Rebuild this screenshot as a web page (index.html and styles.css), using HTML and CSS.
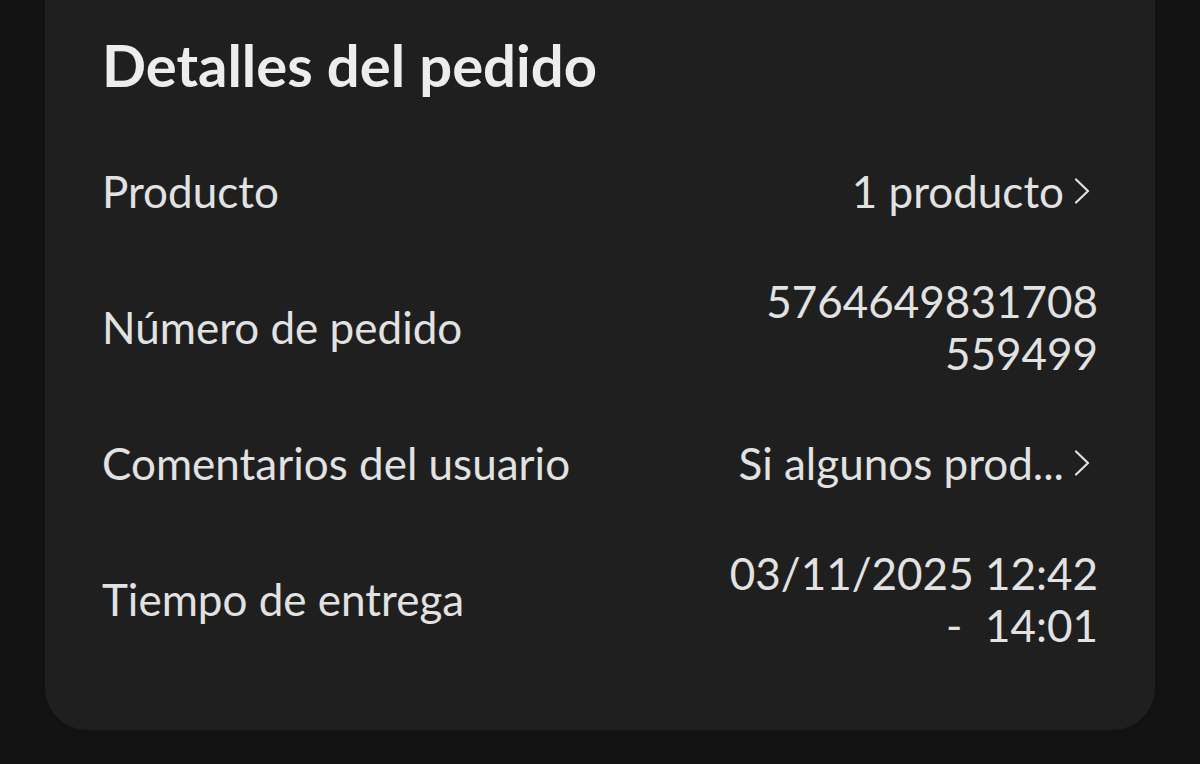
FILE: index.html
```html
<!DOCTYPE html>
<html lang="es">
<head>
<meta charset="utf-8">
<title>Detalles del pedido</title>
<link rel="stylesheet" href="styles.css">
</head>
<body>
<main class="page">
  <section class="card">
    <h1 class="card-title">Detalles del pedido</h1>
    <div class="row">
      <span class="label">Producto</span>
      <span class="value link">1 producto<svg class="chev" viewBox="0 0 16 26" width="16" height="26"><polyline points="2,1.5 14,13 2,24.5"/></svg></span>
    </div>
    <div class="row">
      <span class="label">Número de pedido</span>
      <span class="value">5764649831708<br>559499</span>
    </div>
    <div class="row">
      <span class="label">Comentarios del usuario</span>
      <span class="value link">Si algunos prod...<svg class="chev" viewBox="0 0 16 26" width="16" height="26"><polyline points="2,1.5 14,13 2,24.5"/></svg></span>
    </div>
    <div class="row">
      <span class="label">Tiempo de entrega</span>
      <span class="value pre">03/11/2025 12:42
-  14:01</span>
    </div>
  </section>
</main>
</body>
</html>
```

FILE: styles.css
```css
html, body {
  margin: 0;
  padding: 0;
  background: #121212;
}
body {
  font-family: Lato, "Noto Sans", sans-serif;
  color: #e2e2e2;
}
.page {
  padding: 0 45px;
  height: 764px;
  box-sizing: border-box;
}
.card {
  background: #1f1f1f;
  border-radius: 0 0 42px 42px;
  padding: 30px 57px 50px 57px;
}
.card-title {
  margin: 0 0 36px 0;
  font-size: 58px;
  line-height: 70px;
  font-weight: 700;
  color: #ededed;
}
.row {
  display: flex;
  justify-content: space-between;
  align-items: center;
  padding: 29px 0;
}
.label, .value {
  font-size: 44px;
  line-height: 52px;
  font-weight: 400;
}
.value {
  text-align: right;
}
.link {
  display: flex;
  align-items: center;
}
.pre {
  white-space: pre;
}
.chev {
  margin-left: 10px;
  margin-right: 8px;
  fill: none;
  stroke: #e0e0e0;
  stroke-width: 2.2;
  stroke-linecap: round;
  stroke-linejoin: round;
}
```
